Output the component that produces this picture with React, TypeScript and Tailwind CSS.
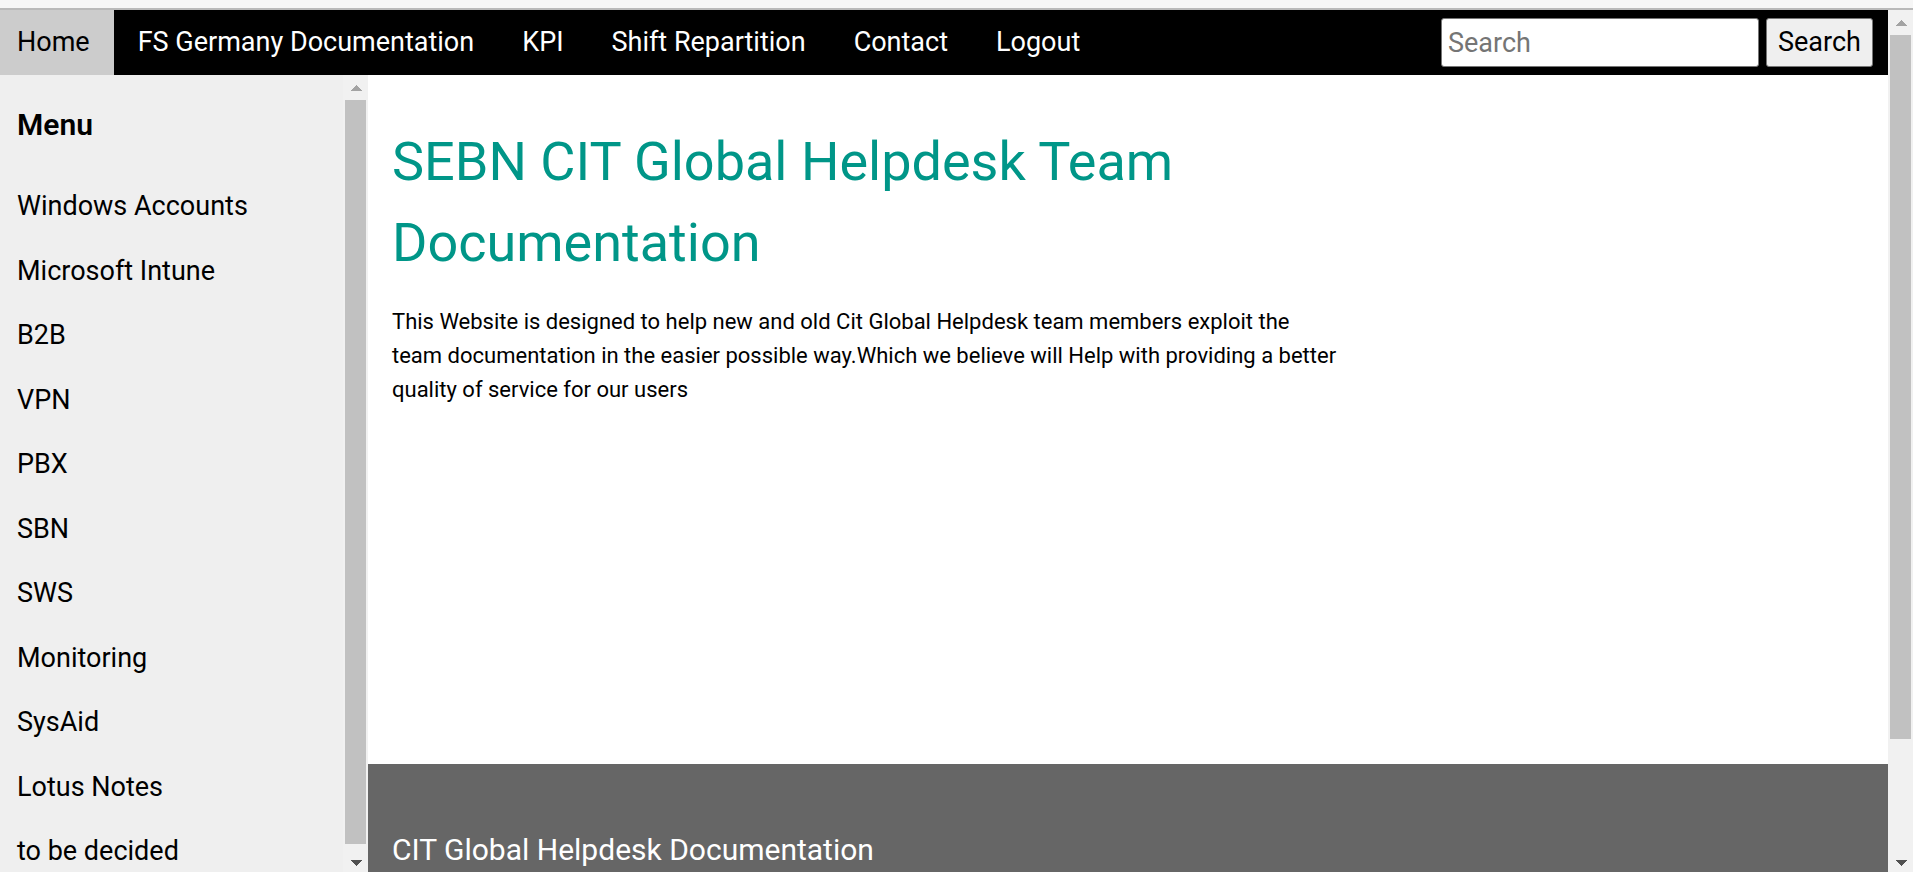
const navLinks = ['FS Germany Documentation', 'KPI', 'Shift Repartition', 'Contact', 'Logout'];

const menuItems = [
  'Windows Accounts',
  'Microsoft Intune',
  'B2B',
  'VPN',
  'PBX',
  'SBN',
  'SWS',
  'Monitoring',
  'SysAid',
  'Lotus Notes',
  'to be decided',
];

function Arrow({ down = false }: { down?: boolean }) {
  return (
    <svg viewBox="0 0 12 6" className="h-[6px] w-3" aria-hidden="true" shapeRendering="crispEdges">
      {down ? <path d="M0 0H12L6 6Z" fill="#505050" /> : <path d="M6 0L12 6H0Z" fill="#a3a3a3" />}
    </svg>
  );
}

function ScrollBar({ page = false }: { page?: boolean }) {
  return (
    <div className="flex w-[25px] shrink-0 flex-col bg-[#f1f1f1] px-[2px]" aria-hidden="true">
      <div className="flex h-[25px] shrink-0 items-center justify-center">
        <Arrow />
      </div>
      <div className="flex min-h-0 flex-1 flex-col">
        <div className={page ? 'h-[87%] bg-[#c1c1c1]' : 'h-full bg-[#c1c1c1]'} />
      </div>
      <div className="flex h-7 shrink-0 items-center justify-center pt-[10px]">
        <Arrow down />
      </div>
    </div>
  );
}

export default function App() {
  return (
    <div className="flex h-screen flex-col overflow-hidden bg-white font-['Roboto',sans-serif] text-[27px] text-black">
      <div className="h-[10px] shrink-0 border-b-2 border-[#b9b9b9] bg-[#f6f6f6]" />
      <div className="flex min-h-0 flex-1">
        <div className="flex min-w-0 flex-1 flex-col">
          <header className="flex h-[65px] shrink-0 items-stretch bg-black text-white">
            <nav className="flex leading-[65px]">
              <a href="#home" className="bg-[#cccccc] pr-6 pl-[17px] text-black">
                Home
              </a>
              {navLinks.map((label) => (
                <a key={label} href="#top" className="px-6">
                  {label}
                </a>
              ))}
            </nav>
            <form className="ml-auto flex items-center gap-[7px] pr-[15px]" onSubmit={(e) => e.preventDefault()}>
              <input
                type="search"
                aria-label="Search"
                placeholder="Search"
                className="h-[49px] w-[318px] rounded-[3px] border border-[#767676] bg-white px-[6px] text-black placeholder:text-[#757575]"
              />
              <button type="submit" className="h-[49px] w-[107px] rounded-[3px] border border-[#767676] bg-[#efefef] text-black">
                Search
              </button>
            </form>
          </header>
          <div className="flex min-h-0 flex-1">
            <aside className="flex w-[368px] shrink-0 bg-[#efefef]">
              <div className="min-w-0 flex-1 overflow-hidden">
                <h2 className="pt-[27px] pb-[27px] pl-[17px] text-[30px] leading-[45px] font-semibold">Menu</h2>
                <nav className="grid h-[710px] auto-rows-fr">
                  {menuItems.map((label) => (
                    <a key={label} href="#top" className="flex items-center pl-[17px]">
                      {label}
                    </a>
                  ))}
                </nav>
              </div>
              <ScrollBar />
            </aside>
            <div className="flex min-w-0 flex-1 flex-col">
              <main className="flex-1 px-6 pt-[46px]">
                <div className="w-2/3">
                  <h1 className="text-[54px] leading-[81px] text-[#009688]">
                    SEBN CIT Global Helpdesk Team Documentation
                  </h1>
                  <p className="mt-[22px] text-[22px] leading-[34px]">
                    This Website is designed to help new and old Cit Global Helpdesk team members exploit the
                    <br />
                    team documentation in the easier possible way.Which we believe will Help with providing a better
                    <br />
                    quality of service for our users
                  </p>
                </div>
              </main>
              <footer className="h-[108px] shrink-0 overflow-hidden bg-[#666666] px-6 pt-[63px] text-white">
                <h2 className="text-[30px] leading-[45px]">CIT Global Helpdesk Documentation</h2>
              </footer>
            </div>
          </div>
        </div>
        <ScrollBar page />
      </div>
    </div>
  );
}
